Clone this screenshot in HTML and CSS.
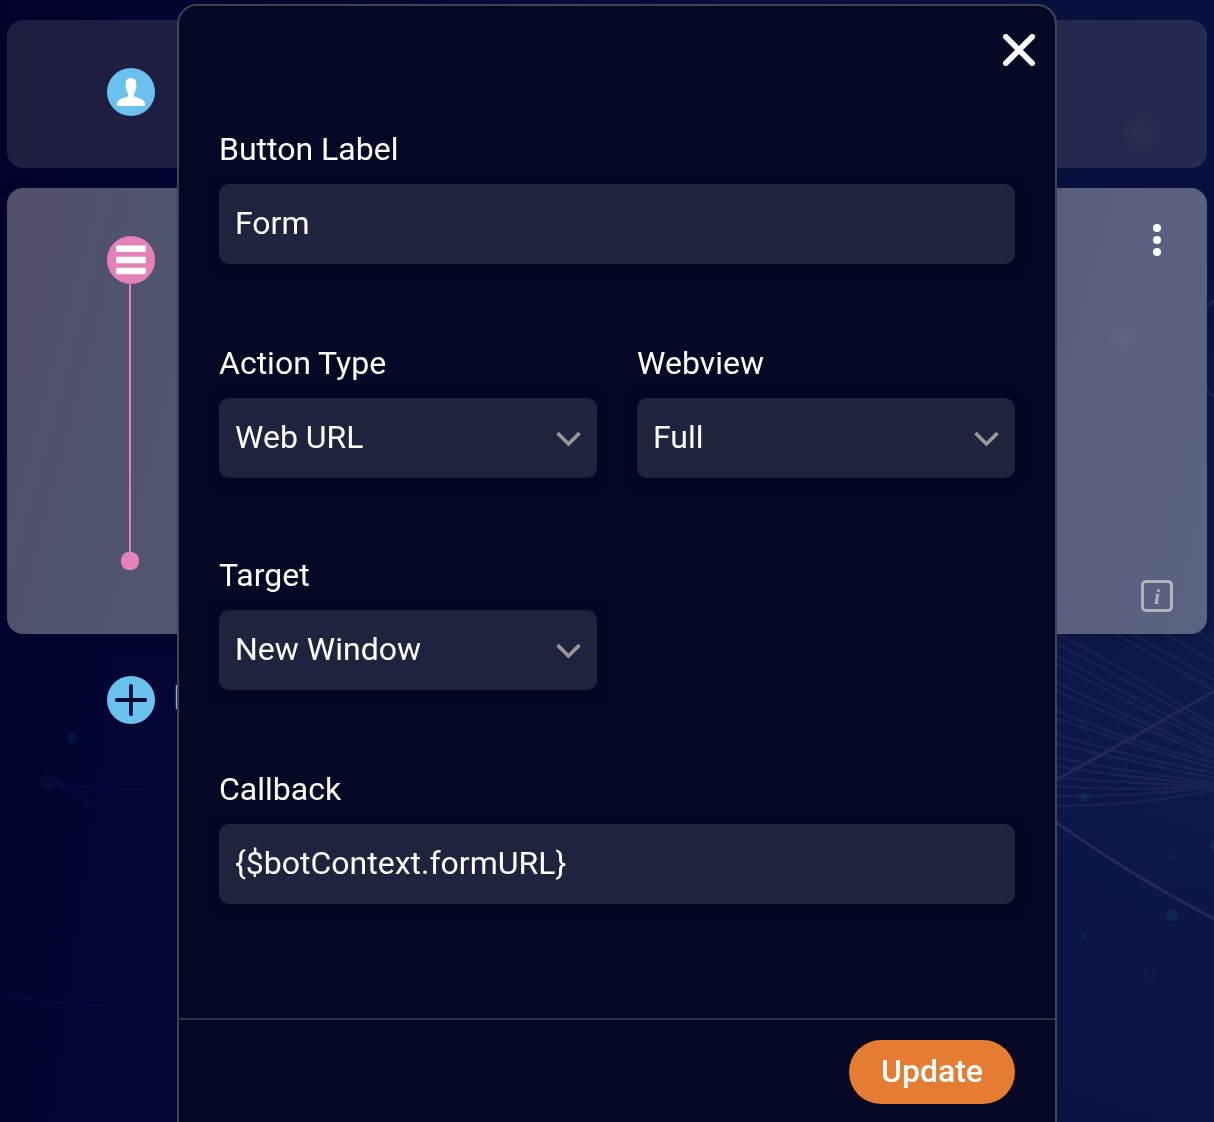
FILE: index.html
```
<!DOCTYPE html>
<html lang="en">
<head>
<meta charset="utf-8">
<title>Edit Button</title>
<link rel="stylesheet" href="styles.css">
</head>
<body>
<svg class="backdrop" viewBox="0 0 1214 1122" fill="none" aria-hidden="true">
  <g class="waves">
    <path d="M1050 630Q1120 665 1214 726M1050 640Q1120 676 1214 731M1050 652Q1130 696 1214 740M1050 661Q1130 702 1214 746M1050 680Q1130 717 1214 753M1050 688Q1130 724 1214 757M1050 708Q1130 742 1214 763M1050 716Q1130 745 1214 768M1050 733Q1130 757 1214 773M1050 742Q1130 762 1214 778M1050 756Q1130 773 1214 782M1050 765Q1130 779 1214 784M1050 777Q1140 784 1214 786M1050 786Q1140 792 1214 785M1050 796Q1140 797 1214 787M1050 806Q1140 806 1214 790M1110 630Q1160 660 1214 690M1125 630Q1170 655 1214 680M1160 630L1214 662M1195 630L1214 644"/>
  </g>
  <path class="ray" d="M1050 783Q1120 745 1214 691M1050 818Q1130 875 1214 919"/>
  <path class="arc" d="M1190 312Q1205 309 1214 300M1190 380Q1202 386 1214 397"/>
  <path class="violet" d="M50 782Q110 792 180 790M55 782Q120 822 180 857M0 994Q80 1009 180 1008"/>
  <g class="specks">
    <circle cx="72" cy="738" r="5" opacity=".6"/><circle cx="49" cy="782" r="9" opacity=".25"/>
    <circle cx="1084" cy="797" r="5"/><circle cx="1172" cy="915" r="6"/>
    <circle cx="1171" cy="856" r="3" opacity=".6"/><circle cx="1084" cy="936" r="3" opacity=".7"/>
    <circle cx="1214" cy="846" r="5"/><circle cx="1103" cy="669" r="3" opacity=".4"/><circle cx="1118" cy="722" r="3" opacity=".5"/>
  </g>
  <circle class="ring" cx="1150" cy="975" r="6"/>
</svg>

<main class="flow">
  <section class="card card-user">
    <span class="badge blue">
      <svg width="48" height="48" viewBox="0 0 48 48"><path fill="#fff" d="M24 10C27.500 10 29.200 12.300 29.200 15.500L29.400 19C29.400 20.500 28.700 21 28.500 22C28.200 23.600 27.700 24.700 27 25.500V28C28.500 29.500 31.500 29.700 34.500 31C37.200 32.300 38 34.500 38 37V38H10V37C10 34.500 10.800 32.300 13.500 31C16.500 29.700 19.500 29.500 21 28V25.500C20.300 24.700 19.800 23.600 19.500 22C19.300 21 18.600 20.500 18.600 19L18.800 15.500C18.800 12.300 20.500 10 24 10Z"/></svg>
    </span>
  </section>
  <section class="card card-bot">
    <div class="thread">
      <span class="badge pink">
        <svg width="48" height="48" viewBox="0 0 48 48"><path fill="#fff" d="M9.300 9.500h29.400v6.600H9.300zM9.300 20.700h29.400v6.600H9.300zM9.300 31.700h29.400v6.600H9.300z"/></svg>
      </span>
      <span class="line"></span>
      <span class="dot"></span>
    </div>
    <div class="tools">
      <svg width="8" height="32" viewBox="0 0 8 32" fill="#fff"><circle cx="4" cy="4" r="4"/><circle cx="4" cy="16" r="4"/><circle cx="4" cy="28" r="4"/></svg>
      <span class="info">i</span>
    </div>
  </section>
  <div class="add">
    <span class="badge blue">
      <svg width="48" height="48" viewBox="0 0 48 48"><path d="M9.800 24h28.400M24 9.800v28.400" stroke="#060a35" stroke-width="3.800" stroke-linecap="round"/></svg>
    </span>
    <span class="add-text">N</span>
  </div>
</main>

<div class="modal" role="dialog">
  <div class="modal-head">
    <svg width="32" height="32" viewBox="0 0 32 32"><path d="M2.800 2.800l26.400 26.400M29.200 2.800L2.800 29.200" stroke="#fff" stroke-width="5.600" stroke-linecap="round"/></svg>
  </div>
  <div class="modal-body">
    <div class="field">
      <span class="label">Button Label</span>
      <div class="control">Form</div>
    </div>
    <div class="pair">
      <div class="field">
        <span class="label">Action Type</span>
        <div class="control">Web URL<svg class="chevron" width="26" height="16" viewBox="0 0 26 16"><path d="M1.500 2l11 11 11-11"/></svg></div>
      </div>
      <div class="field">
        <span class="label">Webview</span>
        <div class="control">Full<svg class="chevron" width="26" height="16" viewBox="0 0 26 16"><path d="M1.500 2l11 11 11-11"/></svg></div>
      </div>
    </div>
    <div class="pair target">
      <div class="field">
        <span class="label">Target</span>
        <div class="control">New Window<svg class="chevron" width="26" height="16" viewBox="0 0 26 16"><path d="M1.500 2l11 11 11-11"/></svg></div>
      </div>
    </div>
    <div class="field">
      <span class="label">Callback</span>
      <div class="control">{$botContext.formURL}</div>
    </div>
  </div>
  <div class="modal-foot"><button class="update">Update</button></div>
</div>
</body>
</html>
```
FILE: styles.css
```
* { box-sizing: border-box; }
body {
  margin: 0;
  height: 1122px;
  position: relative;
  overflow: hidden;
  color: #fff;
  font: 32px/38px Roboto, sans-serif;
  background: radial-gradient(ellipse 520px 500px at 1214px 690px, rgba(18, 34, 82, .6), transparent), linear-gradient(98deg, #02012b 0%, #030532 15%, #081040 70%, #0a1140 100%);
}
svg { display: block; }
.backdrop { position: absolute; inset: 0; width: 1214px; height: 1122px; }
.waves { stroke: #20285a; stroke-width: 2.5; opacity: .6; filter: blur(.6px); }
.ray { stroke: #222859; stroke-width: 3; }
.arc { stroke: #16255a; stroke-width: 3; }
.violet { stroke: #08063a; stroke-width: 3; }
.specks { fill: #12325c; opacity: .6; filter: blur(1px); }
.ring { stroke: #0f1e4d; stroke-width: 2; }

.flow { position: relative; display: flex; flex-direction: column; gap: 20px; padding: 20px 7px; }
.card { display: flex; justify-content: space-between; border-radius: 16px; padding: 48px 34px 22px 100px; }
.card-user {
  height: 148px;
  background: radial-gradient(circle 24px at 1134px 113px, rgba(45, 56, 88, .35), transparent), linear-gradient(90deg, #1e1d40, #20224a 50%, #252a50);
}
.card-bot {
  height: 446px;
  background: radial-gradient(circle 30px at 1116px 150px, rgba(105, 110, 137, .3), transparent), linear-gradient(105deg, #52506c, #50546f 15%, #565b79 75%, #5c6483);
  box-shadow: 0 4px 16px rgba(0, 0, 20, .2);
}
.badge { display: block; width: 48px; height: 48px; border-radius: 50%; }
.blue { background: #69c2ee; }
.pink { background: #e681b7; }
.thread { display: flex; flex-direction: column; width: 48px; }
.line { width: 2px; height: 268px; margin-left: 22px; background: #e681b7; }
.dot { width: 18px; height: 18px; margin-left: 14px; border-radius: 8px; background: #e681b7; }
.tools { display: flex; flex-direction: column; align-items: center; justify-content: space-between; margin-top: -12px; }
.info {
  width: 32px; height: 32px;
  border: 3px solid #b2b4ba; border-radius: 5px;
  color: #b2b4ba; text-align: center;
  font: italic bold 22px/27px "Liberation Serif", serif;
}
.add { display: flex; align-items: center; gap: 18px; padding: 22px 100px; }
.add-text { color: #69c2ee; font-size: 34px; margin-top: -6px; }

.modal {
  position: absolute; left: 177px; top: 4px;
  width: 880px; height: 1140px;
  border: 2px solid #42434f; border-radius: 20px;
  background: #050825;
}
.modal-head { display: flex; justify-content: flex-end; padding: 28px 20px 0; height: 124px; }
.modal-body { display: flex; flex-direction: column; gap: 80px; height: 888px; padding: 0 40px; }
.pair { display: grid; grid-template-columns: 1fr 1fr; gap: 40px; }
.target { margin-top: -2px; }
.field { display: flex; flex-direction: column; gap: 16px; }
.control {
  display: flex; align-items: center; justify-content: space-between;
  height: 80px; padding: 0 15px 2px 16px;
  border-radius: 10px; background: #1f233d;
  box-shadow: 0 2px 10px rgba(0, 0, 20, .4);
}
.chevron { fill: none; stroke: #999; stroke-width: 3.6; margin-top: 4px; }
.modal-foot { display: flex; justify-content: flex-end; padding: 20px 40px; border-top: 2px solid #2f3049; }
.update {
  width: 166px; height: 64px; padding: 0 0 2px;
  border: 0; border-radius: 32px;
  background: #e67b32; color: #fff;
  font: 500 32px/38px Roboto, sans-serif;
}
```
